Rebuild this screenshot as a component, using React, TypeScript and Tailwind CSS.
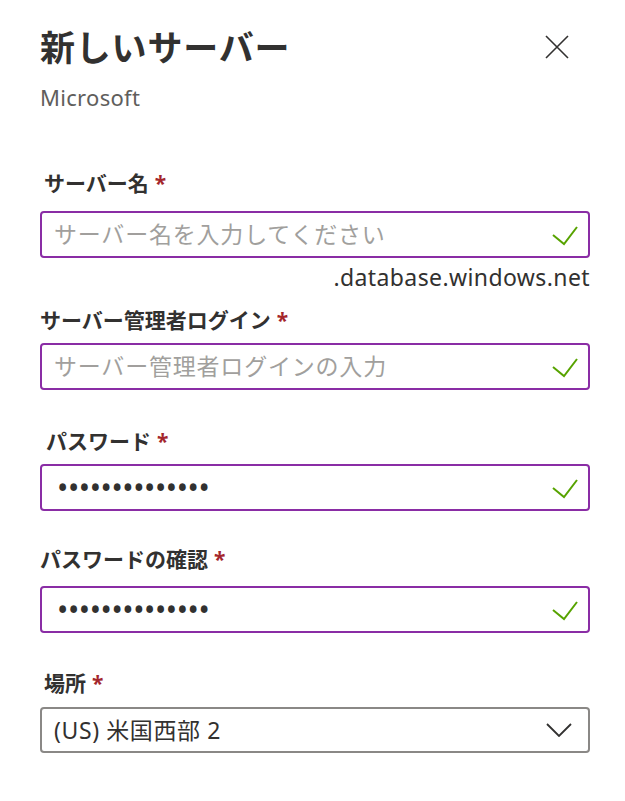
import React from 'react';

const FONT = '"Noto Sans", "Noto Sans CJK JP", sans-serif';

const Check = () => (
    <svg width="26" height="22" viewBox="0 0 26 22" className="shrink-0">
        <polyline points="1,11 12,20 25,3" fill="none" stroke="#57a300" strokeWidth="2" />
    </svg>
);

const Label = ({ text, className = '' }: { text: string; className?: string }) => (
    <div className={`text-[21px] leading-[28px] font-bold text-[#323130] ${className}`}>
        {text}
        <span className="text-[#a4262c] ml-[6px]">*</span>
    </div>
);

const Field = ({ children, className = '' }: { children: React.ReactNode; className?: string }) => (
    <div className={`h-[47px] border-2 border-[#8a2da5] rounded-[4px] flex items-center justify-between pl-[12px] pr-[10px] ${className}`}>
        {children}
    </div>
);

const Placeholder = ({ text }: { text: string }) => (
    <span className="text-[23px] tracking-[0.8px] text-[#a19f9d]">{text}</span>
);

const Dots = () => (
    <span className="text-[30px] leading-none tracking-[-0.4px] text-[#323130] pl-[3px]">••••••••••••••</span>
);

export default function App() {
    return (
        <div className="w-[625px] h-[801px] bg-white pl-[40px] pr-[35px] pt-[24px]" style={{ fontFamily: FONT }}>
            <div className="flex justify-between items-start">
                <div>
                    <h1 className="text-[35px] leading-[48px] font-bold tracking-[0.8px] text-[#323130]">新しいサーバー</h1>
                    <div className="text-[22px] leading-[30px] mt-[10px] tracking-[0.3px] text-[#605e5c]">Microsoft</div>
                </div>
                <button className="mt-[11px] mr-[21px]">
                    <svg width="24" height="24" viewBox="0 0 24 24">
                        <path d="M1 1 L23 23 M23 1 L1 23" stroke="#323130" strokeWidth="1.6" fill="none" />
                    </svg>
                </button>
            </div>

            <Label text="サーバー名" className="mt-[57px] pl-[4px]" />
            <Field className="mt-[14px]">
                <Placeholder text="サーバー名を入力してください" />
                <Check />
            </Field>
            <div className="text-right text-[23px] leading-[28px] tracking-[0.4px] mt-[5px] text-[#323130]">.database.windows.net</div>

            <Label text="サーバー管理者ログイン" className="mt-[15px]" />
            <Field className="mt-[9px]">
                <Placeholder text="サーバー管理者ログインの入力" />
                <Check />
            </Field>

            <Label text="パスワード" className="mt-[37px] pl-[6px]" />
            <Field className="mt-[9px]">
                <Dots />
                <Check />
            </Field>

            <Label text="パスワードの確認" className="mt-[34px]" />
            <Field className="mt-[13px]">
                <Dots />
                <Check />
            </Field>

            <Label text="場所" className="mt-[36px] pl-[4px]" />
            <div className="mt-[10px] h-[46px] border-2 border-[#8a8886] rounded-[4px] flex items-center justify-between pl-[12px] pr-[16px]">
                <span className="text-[23px] tracking-[0.6px] text-[#323130]">(US) 米国西部 2</span>
                <svg width="26" height="14" viewBox="0 0 26 14">
                    <polyline points="1,1 13,13 25,1" fill="none" stroke="#323130" strokeWidth="1.8" />
                </svg>
            </div>
        </div>
    );
}
